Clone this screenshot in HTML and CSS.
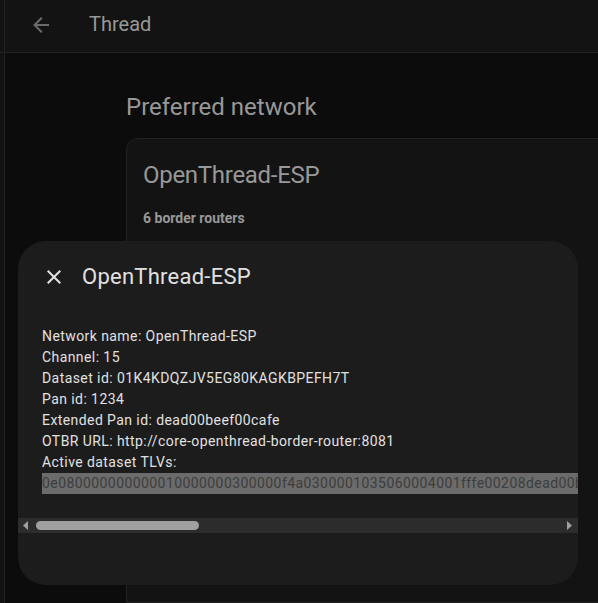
FILE: index.html
```html
<!DOCTYPE html>
<html lang="en">
<head>
<meta charset="utf-8">
<title>Thread</title>
<link rel="stylesheet" href="styles.css">
</head>
<body>
<div class="app">
  <aside class="sidebar"><div class="sidebar-head"></div></aside>
  <div class="main">
    <header class="toolbar">
      <svg class="back" viewBox="0 0 24 24"><path d="M20,11V13H8L13.5,18.5L12.08,19.92L4.16,12L12.08,4.08L13.5,5.5L8,11H20Z"/></svg>
      <span class="page-title">Thread</span>
    </header>
    <main class="content">
      <h1>Preferred network</h1>
      <section class="card">
        <h2>OpenThread-ESP</h2>
        <h4>6 border routers</h4>
      </section>
    </main>
  </div>
</div>
<div class="dialog" role="dialog">
  <div class="dialog-head">
    <svg class="close" viewBox="0 0 24 24"><path d="M19,6.41L17.59,5L12,10.59L6.41,5L5,6.41L10.59,12L5,17.59L6.41,19L12,13.41L17.59,19L19,17.59L13.41,12L19,6.41Z"/></svg>
    <span class="dialog-title">OpenThread-ESP</span>
  </div>
  <div class="dialog-body">
    <div>Network name: OpenThread-ESP</div>
    <div>Channel: 15</div>
    <div>Dataset id: 01K4KDQZJV5EG80KAGKBPEFH7T</div>
    <div>Pan id: 1234</div>
    <div>Extended Pan id: dead00beef00cafe</div>
    <div>OTBR URL: http://core-openthread-border-router:8081</div>
    <div>Active dataset TLVs:</div>
    <div class="selected">0e080000000000010000000300000f4a0300001035060004001fffe00208dead00b</div>
  </div>
  <div class="scrollbar">
    <svg class="arrow" viewBox="0 0 5 9"><path d="M5 0V9L0 4.5Z"/></svg>
    <div class="track"><div class="thumb"></div></div>
    <svg class="arrow" viewBox="0 0 5 9"><path d="M0 0V9L5 4.5Z"/></svg>
  </div>
</div>
</body>
</html>
```
FILE: styles.css
```css
* { box-sizing: border-box; }
body {
  margin: 0;
  height: 603px;
  overflow: hidden;
  background: #0c0c0c;
  color: #989898;
  font-family: Roboto, sans-serif;
  font-size: 14px;
}
.app { display: flex; height: 603px; }
.sidebar {
  width: 5px;
  flex: none;
  background: #131313;
  border-right: 1px solid #222;
}
.sidebar-head { height: 53px; border-bottom: 1px solid #222; }
.main { flex: 1; min-width: 0; display: flex; flex-direction: column; }
.toolbar {
  flex: none;
  height: 53px;
  display: flex;
  align-items: center;
  padding: 0 0 2px 24px;
  background: #131313;
  border-bottom: 1px solid #222;
}
.back { width: 24px; height: 24px; fill: #6a6a6a; }
.page-title { margin-left: 36px; padding-bottom: 2px; font-size: 20px; line-height: 24px; }
.content {
  flex: 1;
  display: flex;
  flex-direction: column;
  padding: 38px 0 0 121px;
}
h1, h2 {
  margin: 0;
  font-size: 24px;
  line-height: 32px;
  font-weight: 400;
}
h1 { margin-bottom: 15px; }
h2 { letter-spacing: -0.288px; }
.card {
  flex: 1;
  margin-right: -20px;
  padding: 20px 16px;
  background: #131313;
  border: 1px solid #222;
  border-radius: 12px 0 0 0;
}
h4 { margin: 19px 0 0; font-size: 14px; line-height: 16px; font-weight: 700; }
.dialog {
  position: absolute;
  left: 18px;
  top: 241px;
  width: 560px;
  height: 344px;
  border-radius: 28px;
  overflow: hidden;
  background: #1c1c1c;
  color: #e1e1e1;
}
.dialog-head { display: flex; align-items: center; height: 72px; padding: 0 24px; }
.close { width: 24px; height: 24px; fill: #e1e1e1; }
.dialog-title { margin-left: 16px; font-size: 22px; line-height: 28px; letter-spacing: 0.25px; }
.dialog-body {
  padding: 13px 0 0 24px;
  line-height: 21px;
  letter-spacing: 0.42px;
  white-space: nowrap;
}
.selected { background: #6b6b6b; color: #3d3d3d; overflow: hidden; }
.scrollbar {
  display: flex;
  align-items: center;
  height: 15px;
  margin-top: 24px;
  padding: 0 6px 0 5px;
  background: #2c2c2c;
}
.arrow { width: 5px; height: 9px; fill: #9f9f9f; }
.track { flex: 1; padding: 0 8px; }
.thumb { width: 163px; height: 9px; border-radius: 5px; background: #9f9f9f; }
```
